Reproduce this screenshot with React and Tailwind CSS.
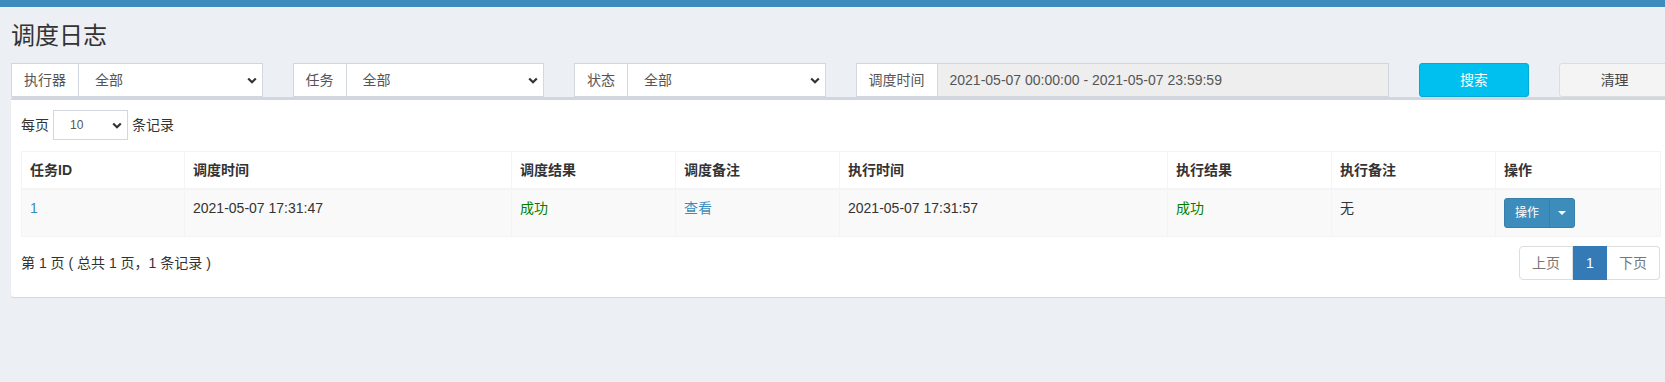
import React from 'react'

const FONT = { fontFamily: '"Liberation Sans", "Noto Sans CJK SC", sans-serif' }

function Chevron() {
  return (
    <svg width="10" height="7" viewBox="0 0 10 7" className="shrink-0">
      <polyline points="1.2,1.5 5,5.2 8.8,1.5" fill="none" stroke="#333" strokeWidth="2.2" />
    </svg>
  )
}

function SelectGroup({ label, value, span = 'col-span-2' }) {
  return (
    <div className={`${span} flex h-[34px]`}>
      <div className="flex items-center px-[12px] bg-white border border-[#d2d6de] text-[14px] text-[#555] whitespace-nowrap">
        {label}
      </div>
      <div className="flex-1 flex items-center justify-between pl-[16px] pr-[5px] bg-white border border-l-0 border-[#d2d6de] text-[14px] text-[#555]">
        <span>{value}</span>
        <Chevron />
      </div>
    </div>
  )
}

const cols = [
  { title: '任务ID', w: 163 },
  { title: '调度时间', w: 327 },
  { title: '调度结果', w: 164 },
  { title: '调度备注', w: 164 },
  { title: '执行时间', w: 328 },
  { title: '执行结果', w: 164 },
  { title: '执行备注', w: 164 },
  { title: '操作', w: 165 },
]

export default function App() {
  return (
    <div className="min-h-screen w-full bg-[#ecf0f5] overflow-hidden text-[#333]" style={FONT}>
      <div className="h-[7px] bg-[#3c8dbc]" />

      <h1 className="mt-[12px] ml-[11px] h-[34px] leading-[34px] text-[24px] text-[#333]">调度日志</h1>

      <div className="mt-[10px] ml-[11px] w-[1659px] grid grid-cols-12 gap-x-[30px] h-[34px]">
        <SelectGroup label="执行器" value="全部" />
        <SelectGroup label="任务" value="全部" />
        <SelectGroup label="状态" value="全部" />
        <div className="col-span-4 flex h-[34px]">
          <div className="flex items-center px-[12px] bg-white border border-[#d2d6de] text-[14px] text-[#555] whitespace-nowrap">
            调度时间
          </div>
          <div className="flex-1 flex items-center px-[12px] bg-[#eeeeee] border border-l-0 border-[#d2d6de] text-[14px] text-[#555]">
            2021-05-07 00:00:00 - 2021-05-07 23:59:59
          </div>
        </div>
        <button className="col-span-1 h-[34px] rounded-[3px] bg-[#00c0ef] border border-[#00acd6] text-white text-[14px]">
          搜索
        </button>
        <button className="col-span-1 h-[34px] rounded-[3px] bg-[#f4f4f4] border border-[#ddd] text-[#444] text-[14px]">
          清理
        </button>
      </div>

      <div className="ml-[11px] w-[1659px] bg-white border-t-[3px] border-[#d2d6de] rounded-[3px] shadow-[0_1px_1px_rgba(0,0,0,0.1)] px-[10px] pt-[10px] pb-[17px]">
        <div className="flex items-center h-[30px] text-[14px] text-[#333]">
          <span>每页</span>
          <div className="mx-[4px] w-[75px] h-[30px] flex items-center justify-between pl-[16px] pr-[5px] border border-[#d2d6de] text-[12px] text-[#555]">
            <span>10</span>
            <Chevron />
          </div>
          <span>条记录</span>
        </div>

        <table className="mt-[11px] table-fixed border-collapse w-[1639px] text-[14px]">
          <colgroup>
            {cols.map((c) => (
              <col key={c.title} style={{ width: c.w }} />
            ))}
          </colgroup>
          <thead>
            <tr>
              {cols.map((c) => (
                <th
                  key={c.title}
                  className="text-left font-bold px-[8px] py-[8px] leading-[20px] border border-[#f4f4f4] border-b-2 text-[#333]"
                >
                  {c.title}
                </th>
              ))}
            </tr>
          </thead>
          <tbody>
            <tr className="bg-[#f9f9f9] align-top">
              <td className="px-[8px] py-[8px] leading-[20px] border border-[#f4f4f4] text-[#3c8dbc]">1</td>
              <td className="px-[8px] py-[8px] leading-[20px] border border-[#f4f4f4]">2021-05-07 17:31:47</td>
              <td className="px-[8px] py-[8px] leading-[20px] border border-[#f4f4f4] text-[#008000]">成功</td>
              <td className="px-[8px] py-[8px] leading-[20px] border border-[#f4f4f4] text-[#3c8dbc]">查看</td>
              <td className="px-[8px] py-[8px] leading-[20px] border border-[#f4f4f4]">2021-05-07 17:31:57</td>
              <td className="px-[8px] py-[8px] leading-[20px] border border-[#f4f4f4] text-[#008000]">成功</td>
              <td className="px-[8px] py-[8px] leading-[20px] border border-[#f4f4f4]">无</td>
              <td className="px-[8px] py-[8px] leading-[20px] border border-[#f4f4f4]">
                <div className="inline-flex h-[30px] rounded-[3px] bg-[#3c8dbc] border border-[#367fa9] text-white text-[12px]">
                  <span className="flex items-center px-[10px] border-r border-[#367fa9]">操作</span>
                  <span className="flex items-center justify-center w-[24px]">
                    <span className="w-0 h-0 border-x-[4px] border-x-transparent border-t-[4px] border-t-white" />
                  </span>
                </div>
              </td>
            </tr>
          </tbody>
        </table>

        <div className="mt-[9px] flex items-center justify-between w-[1639px]">
          <span className="text-[14px] text-[#333]">第 1 页 ( 总共 1 页，1 条记录 )</span>
          <div className="flex h-[34px] text-[14px]">
            <span className="flex items-center px-[12px] border border-[#ddd] rounded-l-[4px] text-[#777] bg-white">上页</span>
            <span className="flex items-center justify-center w-[34px] bg-[#337ab7] border border-[#337ab7] text-white">1</span>
            <span className="flex items-center px-[12px] border border-l-0 border-[#ddd] rounded-r-[4px] text-[#777] bg-white">下页</span>
          </div>
        </div>
      </div>
    </div>
  )
}
